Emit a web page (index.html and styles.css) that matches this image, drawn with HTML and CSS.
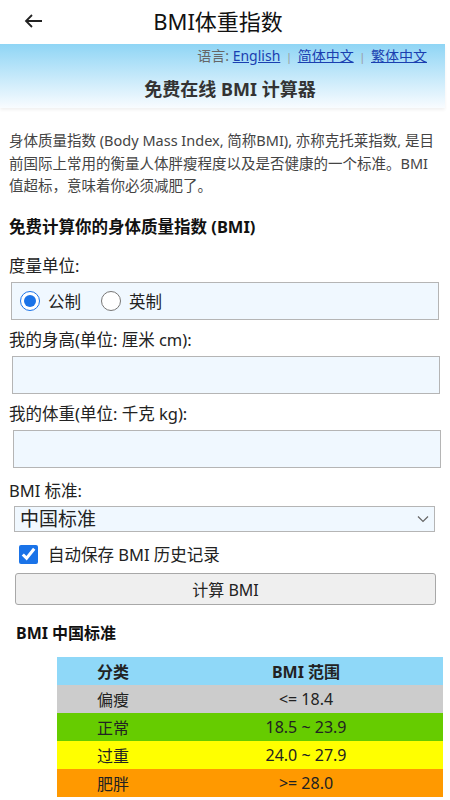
FILE: index.html
```html
<!DOCTYPE html>
<html lang="zh-CN">
<head>
    <meta charset="UTF-8">
    <meta name="viewport" content="width=device-width, initial-scale=1.0">
    <title>BMI体重指数</title>
    <link rel="stylesheet" href="styles.css">
</head>
<body>
    <div class="appbar">
        <span class="back">
            <svg width="19" height="16" viewBox="0 0 19 16"><path d="M18 8H2M8 2L2 8l6 6" fill="none" stroke="#222" stroke-width="1.8"/></svg>
        </span>
        <span class="appbar-title">BMI体重指数</span>
    </div>

    <div class="banner">
        <div class="lang">语言: <a href="#">English</a> <span class="sep">|</span> <a href="#">简体中文</a> <span class="sep">|</span> <a href="#">繁体中文</a></div>
        <h1>免费在线 BMI 计算器</h1>
    </div>

    <div class="content">
        <p class="intro">身体质量指数 (Body Mass Index, 简称BMI), 亦称克托莱指数, 是目前国际上常用的衡量人体胖瘦程度以及是否健康的一个标准。BMI值超标，意味着你必须减肥了。</p>

        <h2>免费计算你的身体质量指数 (BMI)</h2>

        <form id="bmiForm">
            <label class="field-label first">度量单位:</label>
            <div class="unit-box">
                <label class="radio"><input type="radio" name="unit" checked> 公制</label>
                <label class="radio"><input type="radio" name="unit"> 英制</label>
            </div>

            <label class="field-label" for="height">我的身高(单位: 厘米 cm):</label>
            <input type="text" id="height" class="text-input">

            <label class="field-label" for="weight">我的体重(单位: 千克 kg):</label>
            <input type="text" id="weight" class="text-input second">

            <label class="field-label standard" for="standard">BMI 标准:</label>
            <div class="select" id="standard">
                <span>中国标准</span>
                <svg width="12" height="8" viewBox="0 0 12 8"><path d="M1 1.5l5 5 5-5" fill="none" stroke="#666" stroke-width="1.2"/></svg>
            </div>

            <label class="check"><input type="checkbox" checked> 自动保存 BMI 历史记录</label>

            <button type="button" class="calc">计算 BMI</button>
        </form>

        <h3>BMI 中国标准</h3>

        <table class="bmi-table">
            <tr class="head"><th>分类</th><th>BMI 范围</th></tr>
            <tr class="thin"><td>偏瘦</td><td>&lt;= 18.4</td></tr>
            <tr class="normal"><td>正常</td><td>18.5 ~ 23.9</td></tr>
            <tr class="over"><td>过重</td><td>24.0 ~ 27.9</td></tr>
            <tr class="fat"><td>肥胖</td><td>&gt;= 28.0</td></tr>
        </table>
    </div>
</body>
</html>
```

FILE: styles.css
```css
body {
    font-family: "Noto Sans", "Noto Sans CJK SC", sans-serif;
    margin: 0;
    padding: 0;
    background-color: white;
    color: #222;
}

.appbar {
    height: 44px;
    display: flex;
    align-items: center;
    position: relative;
}

.back {
    display: flex;
    margin-left: 24px;
    margin-top: -3px;
}

.appbar-title {
    position: absolute;
    top: 8px;
    left: 0;
    right: 14px;
    text-align: center;
    font-size: 22px;
    line-height: 26px;
    color: #111;
    pointer-events: none;
}

.banner {
    width: 445px;
    height: 64px;
    background: linear-gradient(to bottom, #8fd5f5, #f9fcff);
    box-shadow: 0 2px 3px rgba(0, 0, 0, 0.06);
    padding-top: 2px;
    box-sizing: border-box;
}

.lang {
    text-align: right;
    font-size: 14px;
    color: #666;
    padding-right: 18px;
    line-height: 20px;
}

.lang a {
    color: #1a3fb0;
}

.sep {
    color: #999;
    font-size: 11px;
    margin: 0 2px;
}

.banner h1 {
    margin: 10px 0 0;
    font-size: 18px;
    line-height: 24px;
    text-align: center;
    color: #333;
    padding-left: 15px;
}

.content {
    padding: 0 10px 0 9px;
}

.intro {
    font-size: 14.5px;
    line-height: 22.5px;
    color: #444;
    margin: 21px 0 0;
    width: 433px;
}

h2 {
    font-size: 16.5px;
    line-height: 24px;
    margin: 18px 0 0;
    color: #111;
}

form {
    display: flex;
    flex-direction: column;
}

.field-label {
    font-size: 16.5px;
    line-height: 22px;
    color: #222;
    margin-top: 9px;
}

.field-label.first {
    margin-top: 16px;
}

.field-label.standard {
    margin-top: 12px;
}

.unit-box {
    margin: 5px 1px 0 2px;
    height: 38px;
    box-sizing: border-box;
    background-color: #f0f8ff;
    border: 1px solid #b5b5b5;
    display: flex;
    align-items: center;
    padding-left: 8px;
    gap: 20px;
}

.radio {
    font-size: 16.5px;
    display: flex;
    align-items: center;
    gap: 8px;
}

.radio input {
    width: 20px;
    height: 20px;
    margin: 0;
    accent-color: #1a73e8;
}

.text-input {
    margin: 5px 0 0 3px;
    height: 38px;
    box-sizing: border-box;
    border: 1px solid #b5b5b5;
    background-color: #f0f8ff;
    padding: 4px;
}

.text-input.second {
    margin-left: 4px;
    margin-right: -1px;
}

.select {
    margin: 4px 5px 0 5px;
    height: 26px;
    box-sizing: border-box;
    border: 1px solid #b5b5b5;
    background-color: #f0f8ff;
    display: flex;
    align-items: center;
    justify-content: space-between;
    padding: 0 5px 0 5px;
    font-size: 19px;
    line-height: 24px;
}

.check {
    display: flex;
    align-items: center;
    gap: 10px;
    margin: 12px 0 0 10px;
    font-size: 16.5px;
    line-height: 22px;
}

.check input {
    width: 19px;
    height: 19px;
    margin: 0;
    accent-color: #1a73e8;
}

.calc {
    margin: 7px 4px 0 6px;
    height: 32px;
    background-color: #efefef;
    border: 1px solid #a8a8a8;
    border-radius: 3px;
    font-family: inherit;
    font-size: 16px;
    color: #222;
}

h3 {
    font-size: 16px;
    line-height: 22px;
    margin: 17px 0 0 7px;
    color: #111;
}

.bmi-table {
    margin: 13px 0 0 48px;
    width: 386px;
    border-collapse: collapse;
    font-size: 16px;
}

.bmi-table th,
.bmi-table td {
    height: 28px;
    padding: 0;
    text-align: center;
}

.bmi-table th:first-child,
.bmi-table td:first-child {
    text-align: left;
    padding-left: 40px;
    width: 72px;
}

.head { background-color: #8fd8f8; }
.thin { background-color: #cccccc; }
.normal { background-color: #66cc00; }
.over { background-color: #ffff00; }
.fat { background-color: #ff9900; }
```
